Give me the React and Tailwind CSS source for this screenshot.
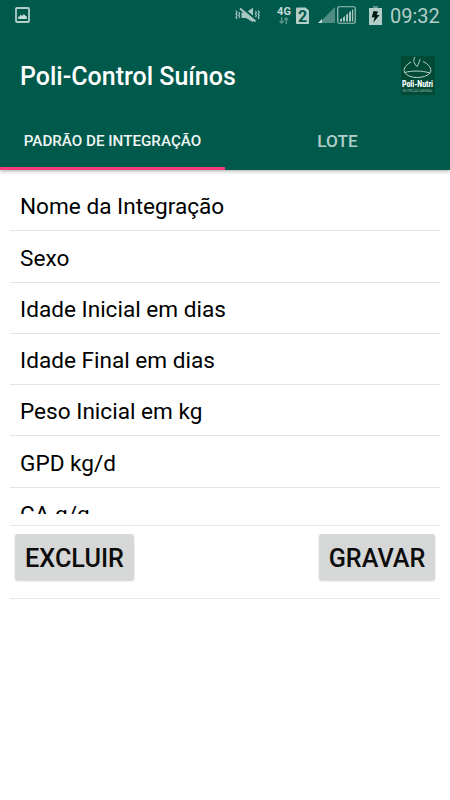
const fields = [
  'Nome da Integração',
  'Sexo',
  'Idade Inicial em dias',
  'Idade Final em dias',
  'Peso Inicial em kg',
  'GPD kg/d',
  'CA g/g',
];

function PictureIcon() {
  return (
    <svg className="h-4 w-[15px]" viewBox="0 0 15 16" fill="none">
      <rect x="1" y="1" width="13" height="14" rx="1" stroke="#b3cec9" strokeWidth="1.8" />
      <path d="M3.2 12V9.6l1.8-.2V8h1.6v1h1V7.4h1.8l.8 1.2 1.6 1V12z" fill="#c4dad6" />
    </svg>
  );
}

function VibrateMuteIcon() {
  return (
    <svg className="h-4 w-[25px]" viewBox="0 0 25 16" fill="none" stroke="#a9c7c1">
      <path d="M6.5 5.5h4.5L18 .8v14.400L11 11H6.500z" fill="#a9c7c1" stroke="none" />
      <path d="M6.500 .5l15 12.500" stroke="#005a4b" strokeWidth="2.5" />
      <path d="M5 1.500l15.500 13" strokeWidth="2" />
      <path d="M1 3.500l1 1.700-1 1.700 1 1.700-1 1.700 1 1.700M3.800 5l.8 1.500-.8 1.500.8 1.500-.8 1.500" strokeWidth="1.200" />
      <path d="M23.200 3.500l1 1.700-1 1.700 1 1.700-1 1.700 1 1.700M20.500 4l.8 1.500-.8 1.500.8 1.500-.8 1.500" strokeWidth="1.200" />
    </svg>
  );
}

function DataArrowsIcon() {
  return (
    <svg className="h-[7px] w-[10px]" viewBox="0 0 10 7" fill="none" stroke="#5d958b" strokeWidth="1.4">
      <path d="M2.600 0v6M.6 4l2 2 2-2M7.200 7V1M5.200 3l2-2 2 2" />
    </svg>
  );
}

function SimIcon() {
  return (
    <svg className="h-[17px] w-[13px]" viewBox="0 0 13 17">
      <path d="M0 1.500Q0 .5 1 .5h8.500L13 3.500V16q0 1-1 1H1q-1 0-1-1z" fill="#b3cec9" />
      <text x="6.500" y="14.500" textAnchor="middle" fontFamily="Roboto, sans-serif" fontSize="16" fontWeight="700" fill="#005a4b">
        2
      </text>
    </svg>
  );
}

function SignalIcon() {
  return (
    <svg className="h-4 w-[17px]" viewBox="0 0 17 16">
      <path d="M1 16L17 0v16z" fill="#4f8b81" />
      <path d="M0 16l4-4v4z" fill="#c4dad6" />
    </svg>
  );
}

function BoxedSignalIcon() {
  return (
    <svg className="h-[18px] w-[19px]" viewBox="0 0 19 18">
      <rect x=".75" y=".75" width="17.500" height="16.500" rx="1.500" fill="none" stroke="#a0c1bb" strokeWidth="1.200" />
      <path d="M3 15.500v-2l2-1.500v3.500zM6 15.500v-4l2-1.600v5.600zM9 15.500V9l2-1.700v8.200zM12 15.500V6.500l2-1.700v10.700zM15 15.500V4l1.200-1v12.500z" fill="#a9c7c1" />
    </svg>
  );
}

function BatteryIcon() {
  return (
    <svg className="h-[19px] w-[13px]" viewBox="0 0 13 19">
      <path d="M4 0h5v2.500H4z" fill="#5d958b" />
      <path d="M0 2h13v17H0z" fill="#b3cec9" />
      <path d="M4.500 5L9 5.400 7.700 8.900l2.900.1-6.300 7.500 1.300-5.300-2.900.1z" fill="#031a16" />
    </svg>
  );
}

function Logo() {
  return (
    <svg className="h-[39px] w-[34px]" viewBox="0 0 34 39">
      <rect width="34" height="39" fill="#004a36" />
      <g fill="none" stroke="#b9d2c9" strokeWidth="1">
        <path d="M14 1c-2 3-1.500 6 2 9.500" />
        <path d="M19 3c-.5 2.500-1.500 5-3 7.500" />
        <path d="M10 6C5.500 8.500 2 12.500 3.500 16c3 7 21 7.500 26 .5C31 12.500 27.500 8 22 5.500" />
        <path d="M3.500 16.500C11 14.500 21 14.500 29 17" />
      </g>
      <text x="1" y="31" textLength="31" lengthAdjust="spacingAndGlyphs" fontFamily="Roboto, sans-serif" fontSize="8.5" fontWeight="900" fill="#fff">
        Poli-Nutri
      </text>
      <text x="1.500" y="36" textLength="30" lengthAdjust="spacingAndGlyphs" fontFamily="Roboto, sans-serif" fontSize="4" fill="#8fb5a8">
        NUTRIÇÃO ANIMAL
      </text>
    </svg>
  );
}

function StatusBar() {
  return (
    <div className="flex h-[30px] items-center pr-[10px] pl-[15px]">
      <PictureIcon />
      <div className="ml-auto flex items-center">
        <VibrateMuteIcon />
        <div className="ml-[17px] flex w-[14px] flex-col items-center">
          <span className="text-[11px] leading-[10px] font-bold text-[#c4dad6]">4G</span>
          <DataArrowsIcon />
        </div>
        <div className="ml-[5px]"><SimIcon /></div>
        <div className="ml-[9px]"><SignalIcon /></div>
        <div className="ml-[2px]"><BoxedSignalIcon /></div>
        <div className="ml-[13px]"><BatteryIcon /></div>
        <span className="ml-[8px] w-[50px] pt-[2px] text-[20px] leading-[28px] whitespace-nowrap text-[#b3cec9]">09:32</span>
      </div>
    </div>
  );
}

function ActionButton({ children, className }) {
  return (
    <button className={`h-[46px] rounded-[3px] bg-[#d6d7d7] pt-[3px] text-[25.2px] font-medium text-[#0c0c0c] shadow-[0_1px_2px_rgba(0,0,0,0.2)] ${className}`}>
      {children}
    </button>
  );
}

function App() {
  return (
    <div className="flex h-[800px] w-[450px] flex-col overflow-hidden bg-white font-['Roboto',sans-serif]">
      <header className="h-[170px] shrink-0 bg-[#005a4b] shadow-[0_1px_4px_rgba(0,0,0,0.35)]">
        <StatusBar />
        <div className="flex h-[90px] items-center justify-between pr-[15px] pl-5">
          <h1 className="pt-[4px] text-[25px] font-medium text-white">Poli-Control Suínos</h1>
          <Logo />
        </div>
        <nav className="grid h-[50px] grid-cols-2">
          <button className="border-b-3 border-[#f93a7c] pb-[4px] text-[15.2px] font-medium text-[#f0f5f4]">
            PADRÃO DE INTEGRAÇÃO
          </button>
          <button className="pb-[6px] text-[17.2px] font-medium text-[#b3cec9]">LOTE</button>
        </nav>
      </header>

      <main className="px-[10px] pt-[10px]">
        <ul className="h-[334px] overflow-hidden">
          {fields.map((field) => (
            <li key={field} className="flex h-[51.3px] items-center border-b border-[#e4e4e4] pt-[4px] pl-[10px] text-[22.6px] text-black">
              {field}
            </li>
          ))}
        </ul>
        <div className="mt-[11px] flex h-[74px] justify-between border-y border-[#e8e8e8] px-[5px] pt-2">
          <ActionButton className="w-[119px]">EXCLUIR</ActionButton>
          <ActionButton className="w-[116px]">GRAVAR</ActionButton>
        </div>
      </main>
    </div>
  );
}

export default App;
